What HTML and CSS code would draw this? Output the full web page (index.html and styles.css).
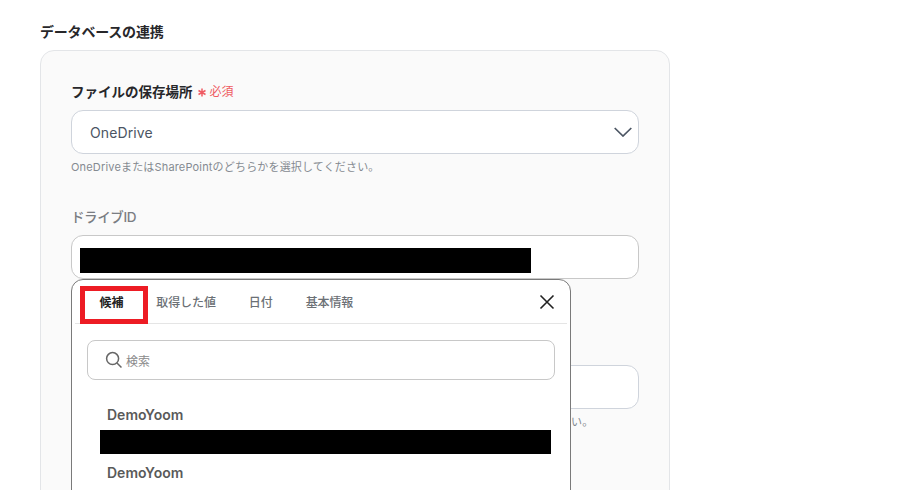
FILE: index.html
```html
<!DOCTYPE html>
<html lang="ja">
<head>
<meta charset="utf-8">
<title>データベースの連携</title>
<link rel="stylesheet" href="styles.css">
</head>
<body>
<main class="page">
  <h2 class="section-title">データベースの連携</h2>
  <section class="card">
    <div class="field">
      <div class="label">ファイルの保存場所<span class="required"><svg class="star" width="8" height="9" viewBox="0 0 8 9"><path d="M4 .5V8.5M.5 2.5 7.5 6.5M7.5 2.5.5 6.5" stroke="#ef5a62" stroke-width="1.5" fill="none"/></svg>必須</span></div>
      <div class="input select">
        <span class="value">OneDrive</span>
        <svg class="chevron" width="18" height="10" viewBox="0 0 18 10"><path d="M.7 1 9 9 17.3 1" fill="none" stroke="#4b5563" stroke-width="1.7"/></svg>
      </div>
      <p class="hint">OneDriveまたはSharePointのどちらかを選択してください。</p>
    </div>
    <div class="field field-drive">
      <div class="label label-muted">ドライブID</div>
      <div class="input input-muted"><span class="redacted redacted-input"></span></div>
      <div class="popup">
        <div class="tabs">
          <span class="tab tab-active">候補</span>
          <span class="tab">取得した値</span>
          <span class="tab">日付</span>
          <span class="tab">基本情報</span>
          <svg class="close" width="16" height="16" viewBox="0 0 16 16"><path d="M1.5 1.5 14.5 14.5M14.5 1.5 1.5 14.5" stroke="#222" stroke-width="1.6" fill="none"/></svg>
        </div>
        <span class="highlight"></span>
        <div class="search">
          <svg class="search-icon" width="18" height="18" viewBox="0 0 18 18"><circle cx="7.6" cy="7.6" r="6" fill="none" stroke="#666" stroke-width="1.5"/><path d="M12 12 16.5 16.5" stroke="#666" stroke-width="1.5" fill="none"/></svg>
          <span>検索</span>
        </div>
        <div class="option">
          <div class="option-name">DemoYoom</div>
          <span class="redacted redacted-option"></span>
        </div>
        <div class="option">
          <div class="option-name">DemoYoom</div>
        </div>
      </div>
    </div>
    <div class="field">
      <div class="label">アイテムID</div>
      <div class="input"></div>
      <p class="hint">ドライブ内のアイテムのIDを入力してください。候補から選択するか、取得した値を利用してください。</p>
    </div>
  </section>
</main>
</body>
</html>
```
FILE: styles.css
```css
* { box-sizing: border-box; }
html, body { margin: 0; height: 490px; overflow: hidden; background: #fff; }
body { font-family: Inter, "Noto Sans CJK JP", sans-serif; color: #2b2f36; }
.page { padding: 22px 238px 0 40px; height: 490px; overflow: hidden; }
.section-title { margin: 0 0 8px; font-size: 14px; line-height: 20px; font-weight: 600; letter-spacing: -.2px; color: #27272a; }
.card { border: 1px solid #e3e5e8; border-radius: 14px; background: #fafafa; padding: 31px 30px 0; height: 600px; }
.field { position: relative; margin-bottom: 33px; }
.field-drive { margin-bottom: 58px; }
.label { font-size: 13.5px; line-height: 20px; font-weight: 600; margin-bottom: 8px; color: #27272a; display: flex; align-items: center; }
.label-muted { color: #7a7d82; font-weight: 500; letter-spacing: -.4px; }
.required { display: inline-flex; align-items: center; font-size: 12px; font-weight: 400; color: #ef5a62; margin-left: 5px; }
.star { flex: none; margin-right: 4px; margin-top: 1px; }
.input { height: 44px; border: 1px solid #cfd4dc; border-radius: 12px; background: #fff; display: flex; align-items: center; }
.input-muted { border-color: #c8c8c8; }
.select { padding: 0 6px 0 18px; justify-content: space-between; }
.value { font-size: 14px; color: #4b5563; letter-spacing: .1px; }
.chevron { flex: none; }
.hint { margin: 6px 0 0; font-size: 11px; line-height: 14px; color: #858a91; letter-spacing: .17px; white-space: nowrap; }
.redacted { display: block; background: #000; }
.redacted-input { width: 451px; height: 25px; margin: 12px 0 0 8px; align-self: flex-start; }
.popup { position: absolute; left: 0; top: 72px; width: 500px; height: 400px; background: #fff; border: 1px solid #7a7a7a; border-radius: 12px; z-index: 2; }
.tabs { height: 44px; margin: 0 3px; padding-left: 8px; border-bottom: 1px solid #e5e5e5; display: flex; align-items: center; font-size: 12px; letter-spacing: -.1px; color: #6b7075; }
.tab { padding: 0 16.5px; font-weight: 500; white-space: nowrap; }
.tab-active { color: #222; font-weight: 700; }
.close { margin-left: auto; margin-right: 12px; }
.highlight { position: absolute; left: 8px; top: 6px; width: 68px; height: 38px; border: 5px solid #ed1c24; }
.search { height: 40px; margin: 16px 15px 0; border: 1px solid #c8c8c8; border-radius: 8px; display: flex; align-items: center; gap: 3px; padding-left: 17px; font-size: 12px; color: #8a8a8a; }
.search-icon { flex: none; }
.option { padding: 0 19px 0 28px; }
.search + .option { margin-top: 25px; }
.option-name { font-size: 14px; line-height: 20px; font-weight: 600; color: #5a5a5a; margin-left: 7px; }
.redacted-option { width: 451px; height: 24px; margin: 5px 0 9px 0; }
```
